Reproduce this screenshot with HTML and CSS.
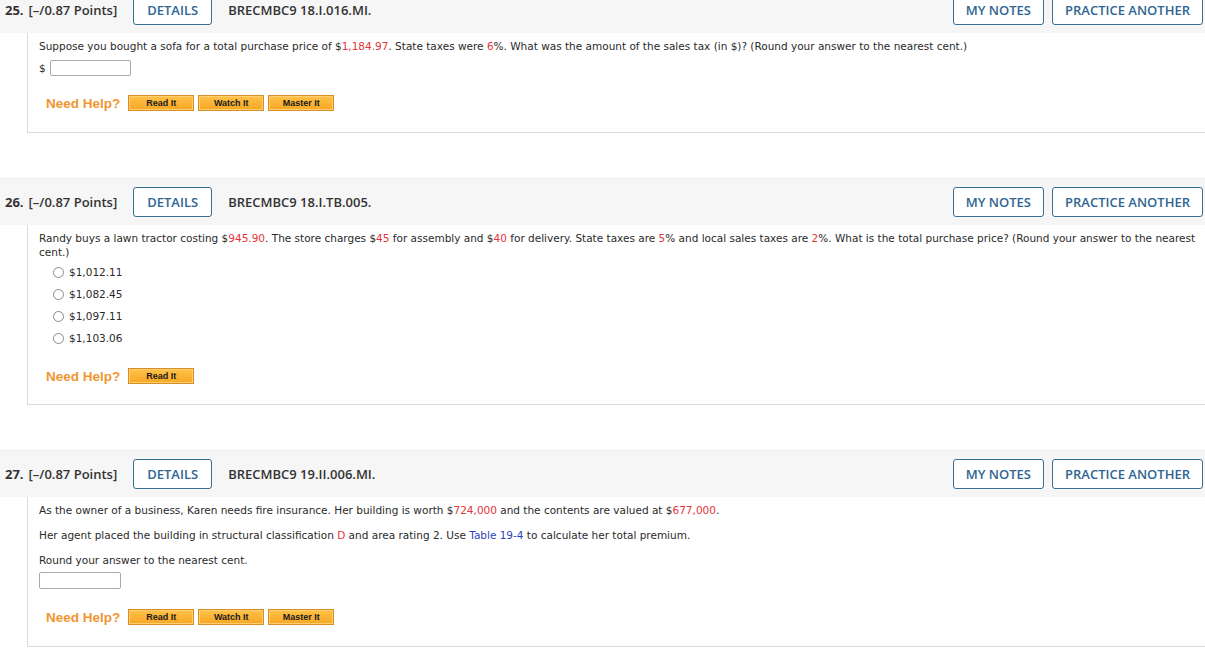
FILE: index.html
```html
<!DOCTYPE html>
<html>
<head>
<meta charset="utf-8">
<link rel="stylesheet" href="styles.css">
</head>
<body>
<div class="page">
  <section class="q">
    <div class="qhead">
      <span class="qnum">25.</span>
      <span class="qpts">[–/0.87 Points]</span>
      <button class="obtn details">DETAILS</button>
      <span class="qid">BRECMBC9 18.I.016.MI.</span>
      <span class="spacer"></span>
      <button class="obtn">MY NOTES</button>
      <button class="obtn">PRACTICE ANOTHER</button>
    </div>
    <div class="qbody b1">
      <p class="txt">Suppose you bought a sofa for a total purchase price of $<span class="red">1,184.97</span>. State taxes were <span class="red">6</span>%. What was the amount of the sales tax (in $)? (Round your answer to the nearest cent.)</p>
      <div class="ansrow"><span class="dollar">$</span><span class="inp w81"></span></div>
      <div class="help">
        <span class="needhelp">Need Help?</span>
        <span class="hbtn">Read It</span>
        <span class="hbtn">Watch It</span>
        <span class="hbtn">Master It</span>
      </div>
    </div>
  </section>

  <section class="q">
    <div class="qhead">
      <span class="qnum">26.</span>
      <span class="qpts">[–/0.87 Points]</span>
      <button class="obtn details">DETAILS</button>
      <span class="qid">BRECMBC9 18.I.TB.005.</span>
      <span class="spacer"></span>
      <button class="obtn">MY NOTES</button>
      <button class="obtn">PRACTICE ANOTHER</button>
    </div>
    <div class="qbody b2">
      <p class="txt">Randy buys a lawn tractor costing $<span class="red">945.90</span>. The store charges $<span class="red">45</span> for assembly and $<span class="red">40</span> for delivery. State taxes are <span class="red">5</span>% and local sales taxes are <span class="red">2</span>%. What is the total purchase price? (Round your answer to the nearest cent.)</p>
      <ul class="opts">
        <li><span class="radio"></span>$1,012.11</li>
        <li><span class="radio"></span>$1,082.45</li>
        <li><span class="radio"></span>$1,097.11</li>
        <li><span class="radio"></span>$1,103.06</li>
      </ul>
      <div class="help">
        <span class="needhelp">Need Help?</span>
        <span class="hbtn">Read It</span>
      </div>
    </div>
  </section>

  <section class="q">
    <div class="qhead">
      <span class="qnum">27.</span>
      <span class="qpts">[–/0.87 Points]</span>
      <button class="obtn details">DETAILS</button>
      <span class="qid">BRECMBC9 19.II.006.MI.</span>
      <span class="spacer"></span>
      <button class="obtn">MY NOTES</button>
      <button class="obtn">PRACTICE ANOTHER</button>
    </div>
    <div class="qbody b3">
      <p class="txt">As the owner of a business, Karen needs fire insurance. Her building is worth $<span class="red">724,000</span> and the contents are valued at $<span class="red">677,000</span>.</p>
      <p class="txt para">Her agent placed the building in structural classification <span class="red">D</span> and area rating 2. Use <span class="link">Table 19-4</span> to calculate her total premium.</p>
      <p class="txt para">Round your answer to the nearest cent.</p>
      <div class="ansrow2"><span class="inp w82"></span></div>
      <div class="help">
        <span class="needhelp">Need Help?</span>
        <span class="hbtn">Read It</span>
        <span class="hbtn">Watch It</span>
        <span class="hbtn">Master It</span>
      </div>
    </div>
  </section>
</div>
</body>
</html>
```

FILE: styles.css
```css
html, body {
  margin: 0;
  padding: 0;
  background: #ffffff;
}

.page {
  margin-top: -14px;
  width: 1205px;
  overflow: hidden;
}

.q {
  margin-bottom: 45px;
}

.qhead {
  height: 46px;
  background: #f6f6f6;
  border-top: 1px solid #efefef;
  display: flex;
  align-items: center;
  padding-left: 5px;
  padding-right: 2px;
  font-family: "Open Sans", "Liberation Sans", sans-serif;
  color: #333333;
}

.qnum {
  font-weight: 700;
  font-size: 13px;
  margin-right: 5px;
}

.qpts {
  font-weight: 600;
  font-size: 13px;
  margin-right: 16px;
}

.qid {
  font-weight: 600;
  font-size: 13px;
  margin-left: 16px;
}

.spacer {
  flex: 1;
}

.obtn {
  height: 30px;
  padding: 0 12px;
  border: 1px solid #3a6f93;
  border-radius: 3px;
  background: #ffffff;
  color: #2f6592;
  font-family: "Open Sans", "Liberation Sans", sans-serif;
  font-weight: 600;
  font-size: 13px;
  margin-left: 8px;
  line-height: 28px;
}

.obtn.details {
  margin-left: 0;
  padding: 0 13px;
}

.qbody {
  margin-left: 27px;
  border-left: 1px solid #dcdcdc;
  border-bottom: 1px solid #dcdcdc;
  padding: 6px 0 19px 11px;
  font-family: "DejaVu Sans", Verdana, sans-serif;
  font-size: 10.5px;
  color: #2a2a2a;
}

.b2 {
  padding-bottom: 18px;
}

.txt {
  margin: 0;
  line-height: 14px;
  padding-right: 6px;
}

.txt.para {
  margin-top: 11px;
}

.red {
  color: #e3343a;
}

.link {
  color: #2e3fb8;
}

.ansrow {
  display: flex;
  align-items: center;
  height: 16px;
  margin-top: 7px;
}

.dollar {
  margin-right: 4px;
}

.inp {
  display: inline-block;
  height: 14px;
  border: 1px solid #a9a9a9;
  border-radius: 2px;
  background: #ffffff;
}

.w81 { width: 79px; }
.w82 { width: 80px; height: 15px; }

.ansrow2 {
  margin-top: 5px;
  height: 17px;
}

.opts {
  list-style: none;
  margin: 2px 0 0 0;
  padding: 0 0 0 14px;
}

.opts li {
  height: 22px;
  display: flex;
  align-items: center;
}

.radio {
  display: inline-block;
  width: 9px;
  height: 9px;
  border: 1px solid #8a8a8a;
  border-radius: 50%;
  margin-right: 5px;
}

.help {
  display: flex;
  align-items: center;
  height: 20px;
  margin-top: 17px;
  padding-left: 7px;
}

.b3 .help {
  margin-top: 18px;
}

.needhelp {
  font-family: "Liberation Sans", Arial, sans-serif;
  font-weight: 700;
  font-size: 13.5px;
  color: #f0952f;
  margin-right: 8px;
}

.hbtn {
  width: 64px;
  height: 14px;
  border: 1px solid #d98d26;
  background: linear-gradient(#ffc24a, #f7a623);
  box-shadow: inset 0 0 0 1px #ffcf72;
  font-family: "Liberation Sans", Arial, sans-serif;
  font-weight: 700;
  font-size: 9px;
  color: #1a1a1a;
  display: flex;
  align-items: center;
  justify-content: center;
  margin-right: 4px;
}
```
